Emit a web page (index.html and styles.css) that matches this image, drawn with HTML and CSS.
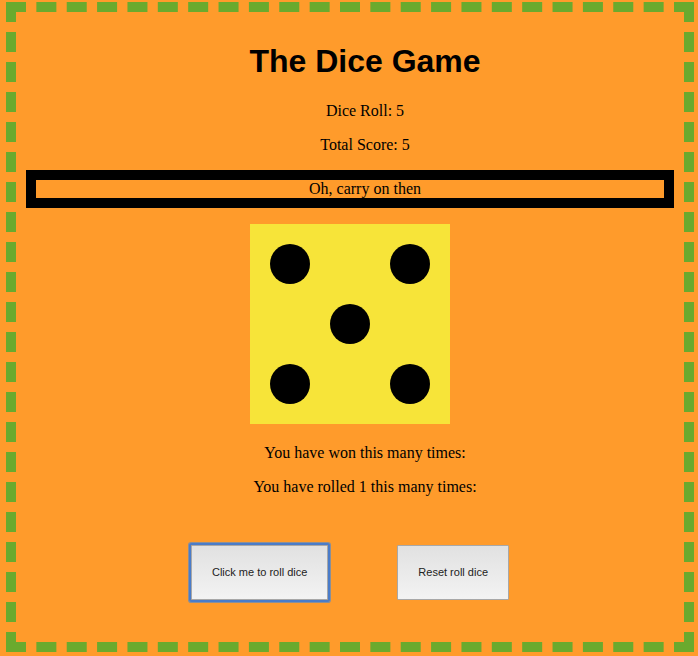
FILE: index.html
```html
<!DOCTYPE html>
<html>
<head>
<meta charset="utf-8">
<title>The Dice Game</title>
<link rel="stylesheet" href="styles.css">
</head>
<body>
<div class="game">
  <h1 class="title">The Dice Game</h1>
  <p class="line">Dice Roll: 5</p>
  <p class="line">Total Score: 5</p>
  <div class="message">Oh, carry on then</div>
  <div class="die">
    <span class="dot tl"></span>
    <span class="dot tr"></span>
    <span class="dot mid"></span>
    <span class="dot bl"></span>
    <span class="dot br"></span>
  </div>
  <p class="line stat-first">You have won this many times:</p>
  <p class="line">You have rolled 1 this many times:</p>
  <div class="buttons">
    <button class="btn btn-focus">Click me to roll dice</button>
    <button class="btn">Reset roll dice</button>
  </div>
</div>
</body>
</html>
```
FILE: styles.css
```css
html, body {
  margin: 0;
  padding: 0;
  background: #ff9b2b;
}
body {
  font-family: "Liberation Serif", "Times New Roman", serif;
  font-size: 16px;
  color: #000;
}
.game {
  box-sizing: border-box;
  margin: 2px 4px 0 6px;
  height: 650px;
  border: 10px dashed #6aaa2e;
  padding: 1px 10px 0;
  text-align: center;
}
.title {
  font-family: "Liberation Sans", Arial, sans-serif;
  font-size: 32px;
  font-weight: bold;
  margin: 30px 0 22px;
  padding-left: 30px;
}
.line {
  margin: 16px 0;
  padding-left: 30px;
}
.message {
  margin-top: 16px;
  border: 10px solid #000;
  line-height: 18px;
  padding-left: 30px;
}
.die {
  box-sizing: border-box;
  width: 200px;
  height: 200px;
  margin: 16px auto 0;
  padding: 20px;
  background: #f7e439;
  display: grid;
  grid-template-columns: repeat(3, 40px);
  grid-template-rows: repeat(3, 40px);
  gap: 20px;
}
.dot {
  width: 40px;
  height: 40px;
  border-radius: 50%;
  background: #000;
}
.tl { grid-column: 1; grid-row: 1; }
.tr { grid-column: 3; grid-row: 1; }
.mid { grid-column: 2; grid-row: 2; }
.bl { grid-column: 1; grid-row: 3; }
.br { grid-column: 3; grid-row: 3; }
.stat-first {
  margin-top: 20px;
}
.buttons {
  display: flex;
  justify-content: center;
  gap: 69px;
  margin-top: 49px;
}
.btn {
  font-family: "Liberation Sans", Arial, sans-serif;
  font-size: 11px;
  line-height: 13px;
  color: #222;
  padding: 20px 20px;
  border: 1px solid #a8a8a8;
  border-radius: 1px;
  background: linear-gradient(#e1e1e1, #f3f3f3);
}
.btn-focus {
  box-shadow: 0 0 0 2px #4a7cc9, 0 0 0 3px #8a8f99;
}
```
